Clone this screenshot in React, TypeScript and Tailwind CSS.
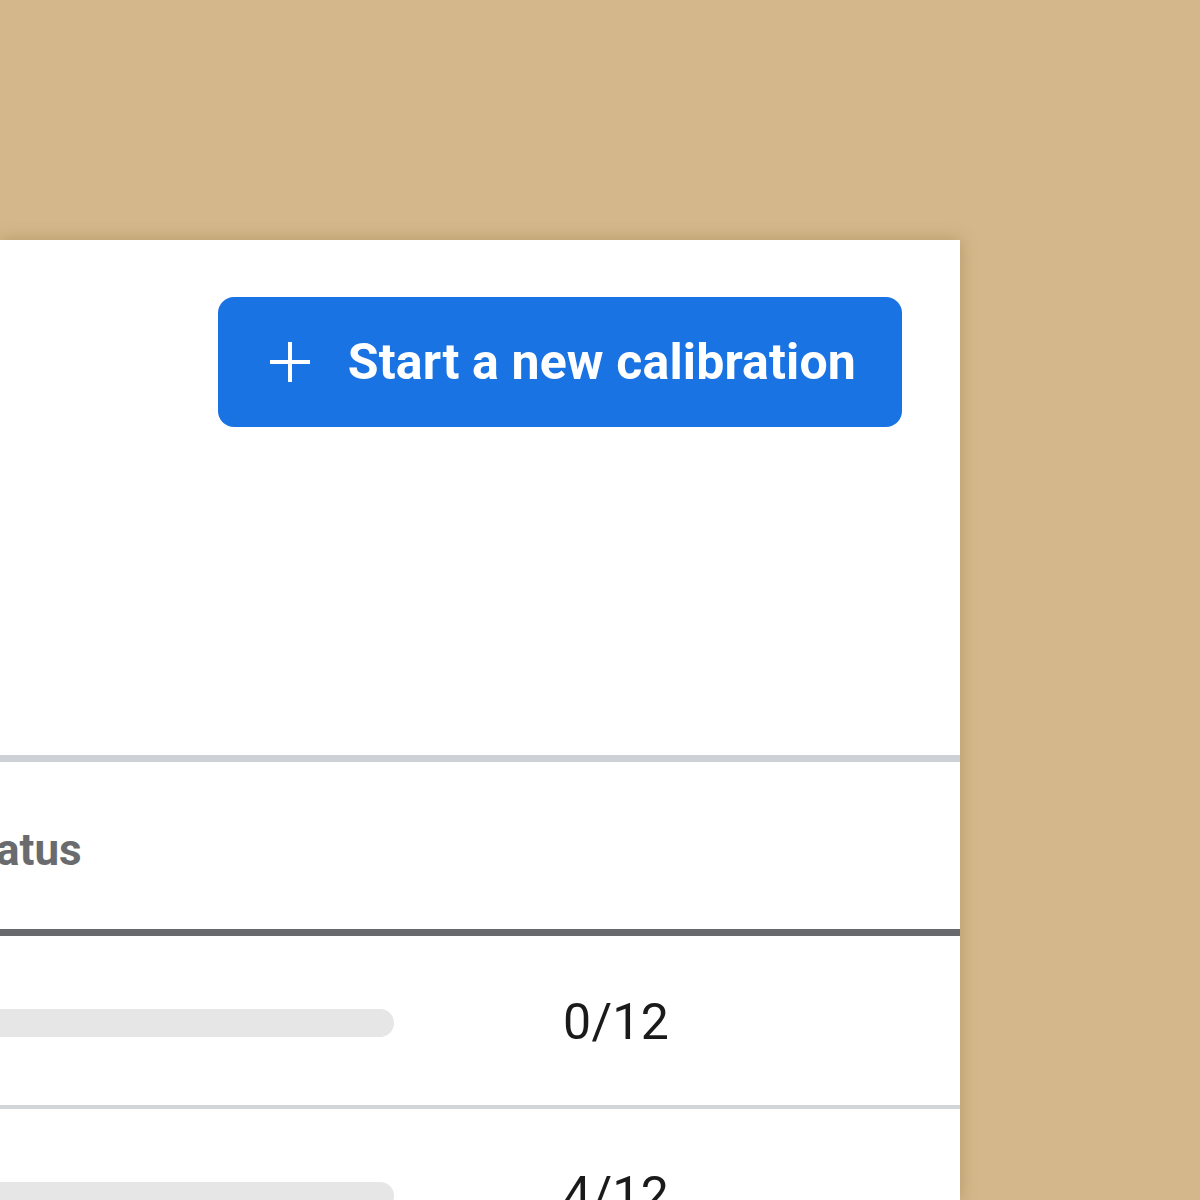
import React from 'react';

const rows = [
  { done: 0, total: 12 },
  { done: 4, total: 12 },
];

const App: React.FC = () => {
  return (
    <div
      className="w-[1200px] h-[1200px] overflow-hidden bg-[#d4b88b]"
      style={{ fontFamily: 'Roboto, "Noto Sans", sans-serif' }}
    >
      <div className="mt-[240px] w-[960px] h-[960px] bg-white shadow-[0_0_16px_rgba(120,90,40,0.35)] overflow-hidden">
        <div className="flex justify-end pt-[57px] pr-[58px]">
          <button className="flex items-center h-[130px] pl-[50px] pr-[46px] rounded-[16px] bg-[#1a73e3] text-white">
            <svg width="44" height="44" viewBox="0 0 44 44" className="mr-[36px]">
              <path d="M22 2v40M2 22h40" stroke="white" strokeWidth="4" />
            </svg>
            <span className="text-[50px] font-bold leading-none tracking-[0.15px]">Start a new calibration</span>
          </button>
        </div>

        <div className="mt-[328px] border-t-[7px] border-[#cdd0d4]">
          <div className="h-[174px] flex items-center pt-[8px] -ml-[46px] border-b-[7px] border-[#68696d]">
            <span className="text-[44px] font-bold text-[#6a6b6f]">Status</span>
          </div>
          {rows.map((r, i) => (
            <div key={i} className="h-[173px] flex items-center pt-[4px] -ml-[42px] border-b-[4px] border-[#d2d5d8]">
              <div className="w-[436px] h-[28px] rounded-full bg-[#e6e6e6]" />
              <span className="ml-[169px] text-[50px] tracking-[0.3px] text-[#1a1a1a]">
                {r.done}/{r.total}
              </span>
            </div>
          ))}
        </div>
      </div>
    </div>
  );
};

export default App;
